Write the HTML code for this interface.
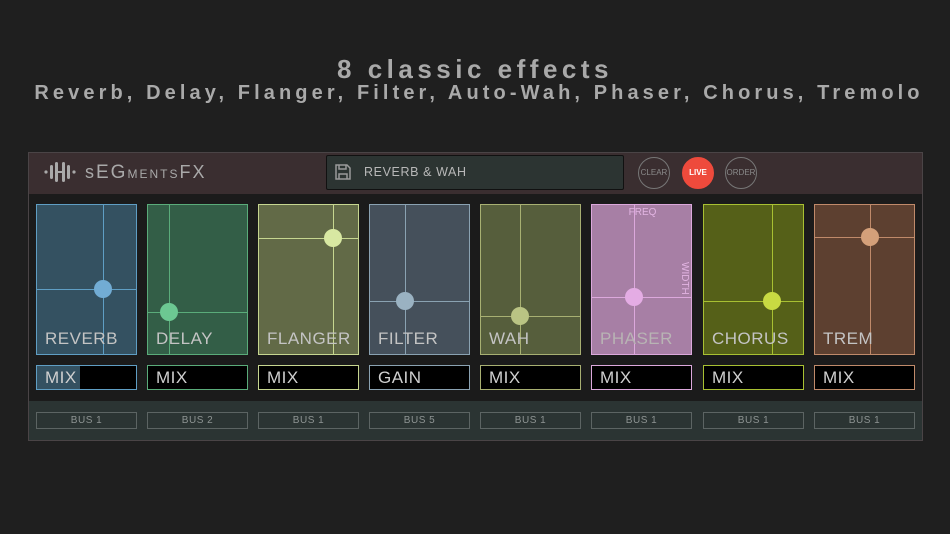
<!DOCTYPE html>
<html><head><meta charset="utf-8"><style>
*{margin:0;padding:0;box-sizing:border-box}
body{width:950px;height:534px;background:#1f1f1f;position:relative;overflow:hidden;font-family:"Liberation Sans",sans-serif}
.t1{position:absolute;left:0;width:950px;top:54px;text-align:center;color:#a9a9a9;font-weight:bold;font-size:26px;letter-spacing:4.5px}
.t2{position:absolute;left:4px;width:950px;top:82px;text-align:center;color:#a9a9a9;font-weight:bold;font-size:20px;letter-spacing:4.1px;white-space:nowrap}
.panel{position:absolute;left:28px;top:152px;width:895px;height:289px;background:#1b1b1b;border:1px solid #4a4446}
.hdr{position:absolute;left:0;top:0;width:893px;height:41px;background:#3a2e30}
.bus{position:absolute;left:0;top:248px;width:893px;height:39px;background:#2b3433}
.a{position:absolute}
.pad{position:absolute;top:204px;width:101px;height:151px;border:1px solid}
.pad .v{position:absolute;top:0;bottom:0;width:1px}
.pad .h{position:absolute;left:0;right:0;height:1px}
.pad .k{position:absolute;width:18px;height:18px;border-radius:50%;margin:-9px 0 0 -9px}
.pad .l{position:absolute;left:8px;top:124px;font-size:17px;color:#c4c4c4;letter-spacing:0.5px}
.mix{position:absolute;top:365px;width:101px;height:25px;background:#000;border:1px solid;color:#d0d0d0;font-size:17px;padding:2px 0 0 8px;letter-spacing:0.5px}
.bb{position:absolute;top:412px;width:101px;height:17px;border:1px solid #5c6463;color:#8e9493;font-size:10px;text-align:center;line-height:15px;letter-spacing:0.5px}
.circ{position:absolute;top:157px;width:32px;height:32px;border-radius:50%;border:1px solid #777;color:#8a8a8a;font-size:8px;text-align:center;line-height:30px}
</style></head><body>
<div class="t1">8 classic effects</div>
<div class="t2">Reverb, Delay, Flanger, Filter, Auto-Wah, Phaser, Chorus, Tremolo</div>
<div class="panel"><div class="hdr"></div><div class="bus"></div></div>

<svg class="a" style="left:44px;top:162px" width="32" height="20" viewBox="0 0 32 20">
<g fill="#a9a9a9"><circle cx="2" cy="10" r="1.6"/><circle cx="30" cy="10" r="1.6"/>
<rect x="6" y="3" width="3" height="14" rx="1.5"/><rect x="11" y="0" width="3" height="20" rx="1.5"/><rect x="14" y="9" width="4" height="2"/><rect x="18" y="0" width="3" height="20" rx="1.5"/><rect x="23" y="3" width="3" height="14" rx="1.5"/></g></svg>
<div class="a" style="left:85px;top:162px;color:#a9a9a9;font-size:18px;letter-spacing:2px;white-space:nowrap">s<span style="font-size:19px">EG</span><span style="font-size:12px">MENTS</span>FX</div>

<div class="a" style="left:326px;top:155px;width:298px;height:35px;background:#2c3432;border:1px solid #111;border-radius:2px"></div>
<svg class="a" style="left:335px;top:164px" width="16" height="16" viewBox="0 0 16 16"><g fill="none" stroke="#9a9a9a" stroke-width="1.5"><path d="M1 1h11l3 3v11H1z"/><path d="M4 1v4h7V1"/><path d="M4 15v-5h8v5"/></g></svg>
<div class="a" style="left:364px;top:165px;color:#b8b8b8;font-size:12.5px;letter-spacing:0.6px">REVERB &amp; WAH</div>

<div class="circ" style="left:638px">CLEAR</div>
<div class="circ" style="left:682px;background:#ee4a3c;border-color:#ee4a3c;color:#fff;font-weight:bold">LIVE</div>
<div class="circ" style="left:725px">ORDER</div>

<div class="pad" style="left:36px;background:#345161;border-color:#5f9ec4"><div class="v" style="left:66px;background:#5f9ec4"></div><div class="h" style="top:84px;background:#5f9ec4"></div><div class="k" style="left:66px;top:84px;background:#72acd4"></div><div class="l">REVERB</div></div>
<div class="pad" style="left:147px;background:#335e47;border-color:#5aac7a"><div class="v" style="left:21px;background:#5aac7a"></div><div class="h" style="top:107px;background:#5aac7a"></div><div class="k" style="left:21px;top:107px;background:#6cc892"></div><div class="l">DELAY</div></div>
<div class="pad" style="left:258px;background:#626a47;border-color:#c6d690"><div class="v" style="left:74px;background:#c6d690"></div><div class="h" style="top:33px;background:#c6d690"></div><div class="k" style="left:74px;top:33px;background:#d8e8a2"></div><div class="l">FLANGER</div></div>
<div class="pad" style="left:369px;background:#45505b;border-color:#8aa2b2"><div class="v" style="left:35px;background:#8aa2b2"></div><div class="h" style="top:96px;background:#8aa2b2"></div><div class="k" style="left:35px;top:96px;background:#9ab2c2"></div><div class="l">FILTER</div></div>
<div class="pad" style="left:480px;background:#565e3c;border-color:#a8b072"><div class="v" style="left:39px;background:#a8b072"></div><div class="h" style="top:111px;background:#a8b072"></div><div class="k" style="left:39px;top:111px;background:#bac484"></div><div class="l">WAH</div></div>
<div class="pad" style="left:591px;background:#a77fa5;border-color:#dca8dc"><div class="v" style="left:42px;background:#dca8dc"></div><div class="h" style="top:92px;background:#dca8dc"></div><div class="k" style="left:42px;top:92px;background:#e4acE4"></div><div class="l" style="color:#b8b4b4">PHASER</div>
<div class="a" style="left:0;width:101px;top:2px;text-align:center;color:#e2b4e2;font-size:10px">FREQ</div>
<div class="a" style="color:#e2b4e2;font-size:10px;transform:rotate(90deg);transform-origin:0 0;left:98px;top:57px">WIDTH</div></div>
<div class="pad" style="left:703px;background:#556018;border-color:#a8c032"><div class="v" style="left:68px;background:#a8c032"></div><div class="h" style="top:96px;background:#a8c032"></div><div class="k" style="left:68px;top:96px;background:#c8da42"></div><div class="l">CHORUS</div></div>
<div class="pad" style="left:814px;background:#5d4030;border-color:#c08a6a"><div class="v" style="left:55px;background:#c08a6a"></div><div class="h" style="top:32px;background:#c08a6a"></div><div class="k" style="left:55px;top:32px;background:#d4a07a"></div><div class="l">TREM</div></div>

<div class="mix" style="left:36px;border-color:#5f9ec4;background:linear-gradient(90deg,#345161 0,#345161 43px,#000 43px)">MIX</div>
<div class="mix" style="left:147px;border-color:#5aac7a">MIX</div>
<div class="mix" style="left:258px;border-color:#c6d690">MIX</div>
<div class="mix" style="left:369px;border-color:#8aa2b2">GAIN</div>
<div class="mix" style="left:480px;border-color:#a8b072">MIX</div>
<div class="mix" style="left:591px;border-color:#dca8dc">MIX</div>
<div class="mix" style="left:703px;border-color:#a8c032">MIX</div>
<div class="mix" style="left:814px;border-color:#c08a6a">MIX</div>

<div class="bb" style="left:36px">BUS 1</div>
<div class="bb" style="left:147px">BUS 2</div>
<div class="bb" style="left:258px">BUS 1</div>
<div class="bb" style="left:369px">BUS 5</div>
<div class="bb" style="left:480px">BUS 1</div>
<div class="bb" style="left:591px">BUS 1</div>
<div class="bb" style="left:703px">BUS 1</div>
<div class="bb" style="left:814px">BUS 1</div>
</body></html>
